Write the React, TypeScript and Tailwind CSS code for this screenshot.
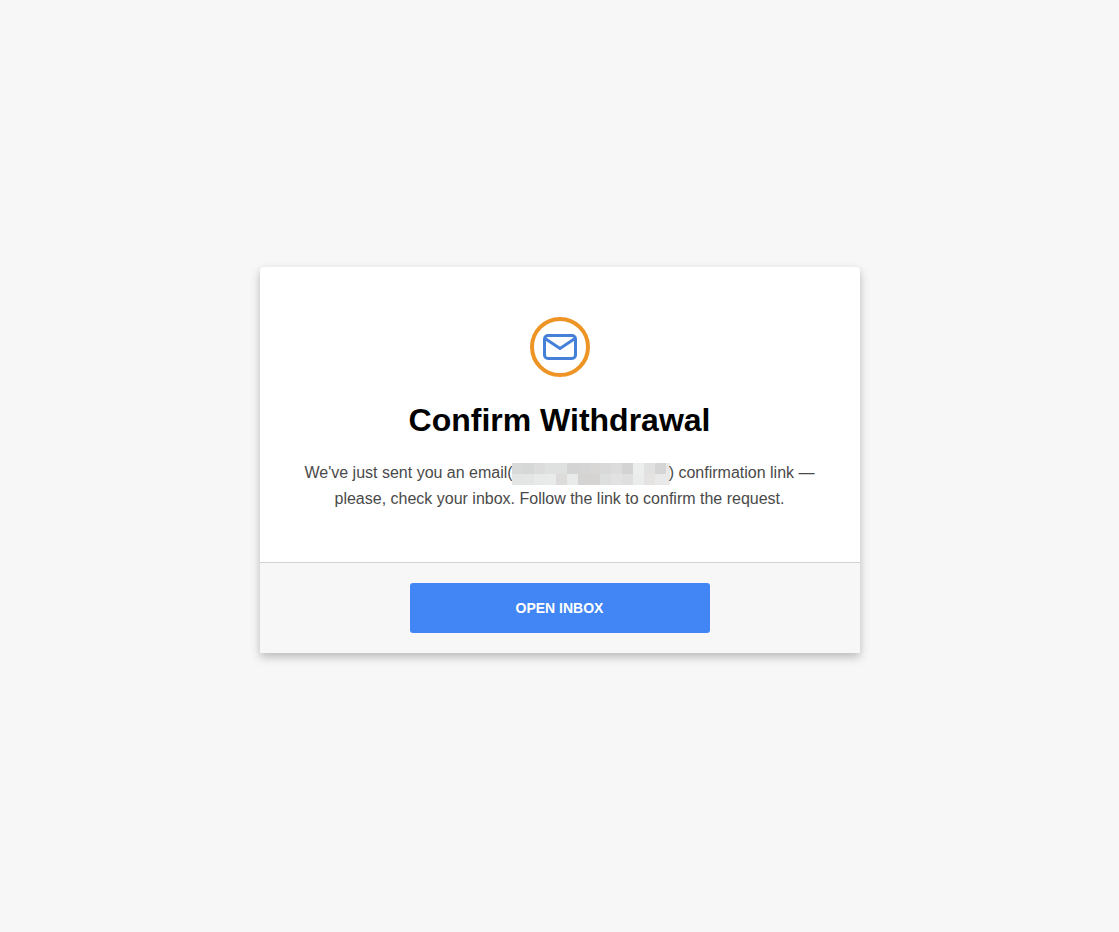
const MASK_TOP = [
  '#d8d9d9', '#d6d7d7', '#dcdcdc', '#dfe0e0', '#dfe0e0', '#d4d4d4', '#d6d5d5', '#d8d7d6',
  '#d9d9d9', '#dcdcdc', '#d3d3d3', '#eceeed', '#e1e1e1', '#d5d5d5', '#e8e8e8',
];
const MASK_BOTTOM = [
  '#e3e4e4', '#e4e5e5', '#e8e9e9', '#e9ebeb', '#dedbdb', '#e9eaea', '#d5d4d3', '#d5d4d3',
  '#dddede', '#e2e2e2', '#dfdfdf', '#ebeded', '#e5e3e1', '#e9e9e9', '#e9e9e9',
];

function MaskedAddress() {
  return (
    <svg
      className="-mx-px inline-block h-[22px] w-[158px] align-middle"
      viewBox="0 0 158 22"
      shapeRendering="crispEdges"
      role="img"
      aria-label="Hidden email address"
    >
      {MASK_TOP.map((fill, i) => (
        <rect key={i} x={i * 11} y={0} width={11} height={11} fill={fill} />
      ))}
      {MASK_BOTTOM.map((fill, i) => (
        <rect key={i} x={i * 11} y={11} width={11} height={11} fill={fill} />
      ))}
    </svg>
  );
}

function MailBadge() {
  return (
    <svg className="size-[60px]" viewBox="0 0 60 60" fill="none" aria-hidden="true">
      <circle cx="30" cy="30" r="28" stroke="#ed9425" strokeWidth="4" />
      <rect x="14.5" y="18.5" width="31" height="23" rx="3.5" stroke="#4580d8" strokeWidth="3" />
      <path d="M15 21.5 30 31.5 45 21.5" stroke="#4580d8" strokeWidth="3" />
    </svg>
  );
}

export default function App() {
  return (
    <main className="flex min-h-screen items-center justify-center bg-[#f7f7f7] pb-3 font-['Liberation_Sans',Arial,sans-serif]">
      <section className="w-full max-w-[600px] rounded-t-[4px] bg-white shadow-[0_4px_10px_rgba(0,0,0,0.25)]">
        <div className="flex flex-col items-center px-10 py-[50px] text-center">
          <MailBadge />
          <h1 className="mt-6 text-[32px] leading-[39px] font-bold text-black">Confirm Withdrawal</h1>
          <p className="mt-5 text-base leading-[26px] text-[#4a4a4a]">
            We've just sent you an email(
            <MaskedAddress />) confirmation link — please, check your inbox. Follow the link to
            confirm the request.
          </p>
        </div>
        <div className="flex justify-center border-t border-[#d3d3d3] bg-[#f7f7f7] p-5">
          <button
            type="button"
            className="h-[50px] w-full max-w-[300px] rounded-[3px] bg-[#4285f4] text-sm font-bold text-white uppercase"
          >
            Open inbox
          </button>
        </div>
      </section>
    </main>
  );
}
